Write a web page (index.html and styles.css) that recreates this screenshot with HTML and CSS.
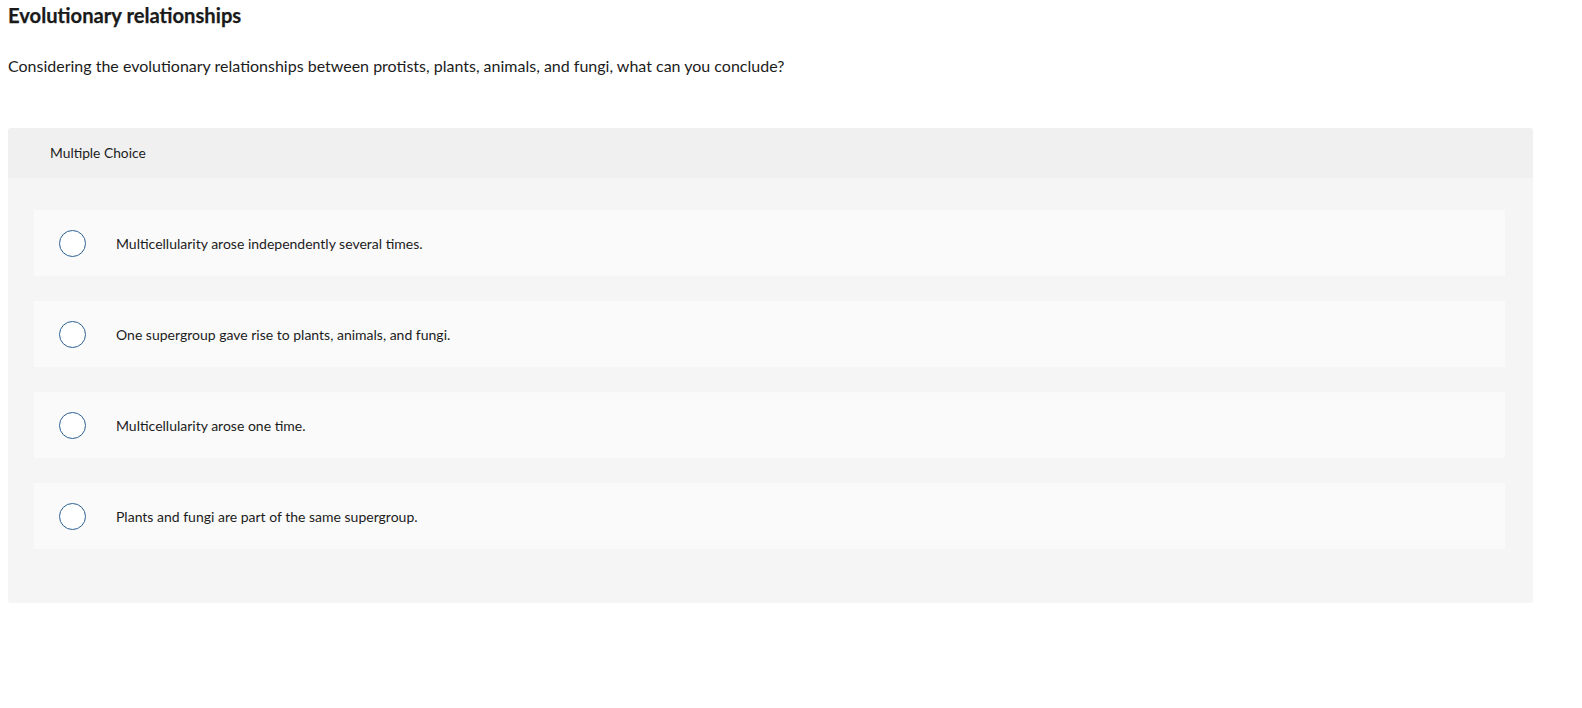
FILE: index.html
```html
<!DOCTYPE html>
<html>
<head>
<meta charset="utf-8">
<link rel="stylesheet" href="styles.css">
</head>
<body>
<h1 class="title">Evolutionary relationships</h1>
<p class="question">Considering the evolutionary relationships between protists, plants, animals, and fungi, what can you conclude?</p>
<div class="mc">
  <div class="mc-head">Multiple Choice</div>
  <div class="mc-body">
    <label class="opt"><span class="radio"></span><span class="opt-text">Multicellularity arose independently several times.</span></label>
    <label class="opt"><span class="radio"></span><span class="opt-text">One supergroup gave rise to plants, animals, and fungi.</span></label>
    <label class="opt"><span class="radio"></span><span class="opt-text">Multicellularity arose one time.</span></label>
    <label class="opt"><span class="radio"></span><span class="opt-text">Plants and fungi are part of the same supergroup.</span></label>
  </div>
</div>
</body>
</html>
```

FILE: styles.css
```css
body {
  margin: 0;
  padding: 0 0 0 8px;
  font-family: Lato, "Liberation Sans", sans-serif;
  color: #1c1c1c;
  background: #fff;
}
.title {
  margin: 0;
  padding-top: 3px;
  font-size: 20.2px;
  line-height: 24px;
  font-weight: 700;
  color: #1a1a1a;
  -webkit-text-stroke: 0.25px #1a1a1a;
}
.question {
  margin: 29px 0 0;
  font-size: 16px;
  line-height: 20px;
}
.mc {
  width: 1525px;
  margin-top: 52px;
  border-radius: 3px;
  overflow: hidden;
  background: #f5f5f5;
}
.mc-head {
  height: 50px;
  background: #f0f0f0;
  padding-left: 42px;
  font-size: 13.8px;
  line-height: 50px;
}
.mc-body {
  padding: 32px 28px 54px 26px;
  display: flex;
  flex-direction: column;
  gap: 25px;
}
.opt {
  height: 66px;
  background: #fafafa;
  display: flex;
  align-items: center;
  padding-left: 25px;
}
.radio {
  width: 25px;
  height: 25px;
  border: 1.5px solid #2b5f92;
  border-radius: 50%;
  background: #fff;
  flex: none;
}
.opt-text {
  margin-left: 30px;
  font-size: 14px;
}
```
